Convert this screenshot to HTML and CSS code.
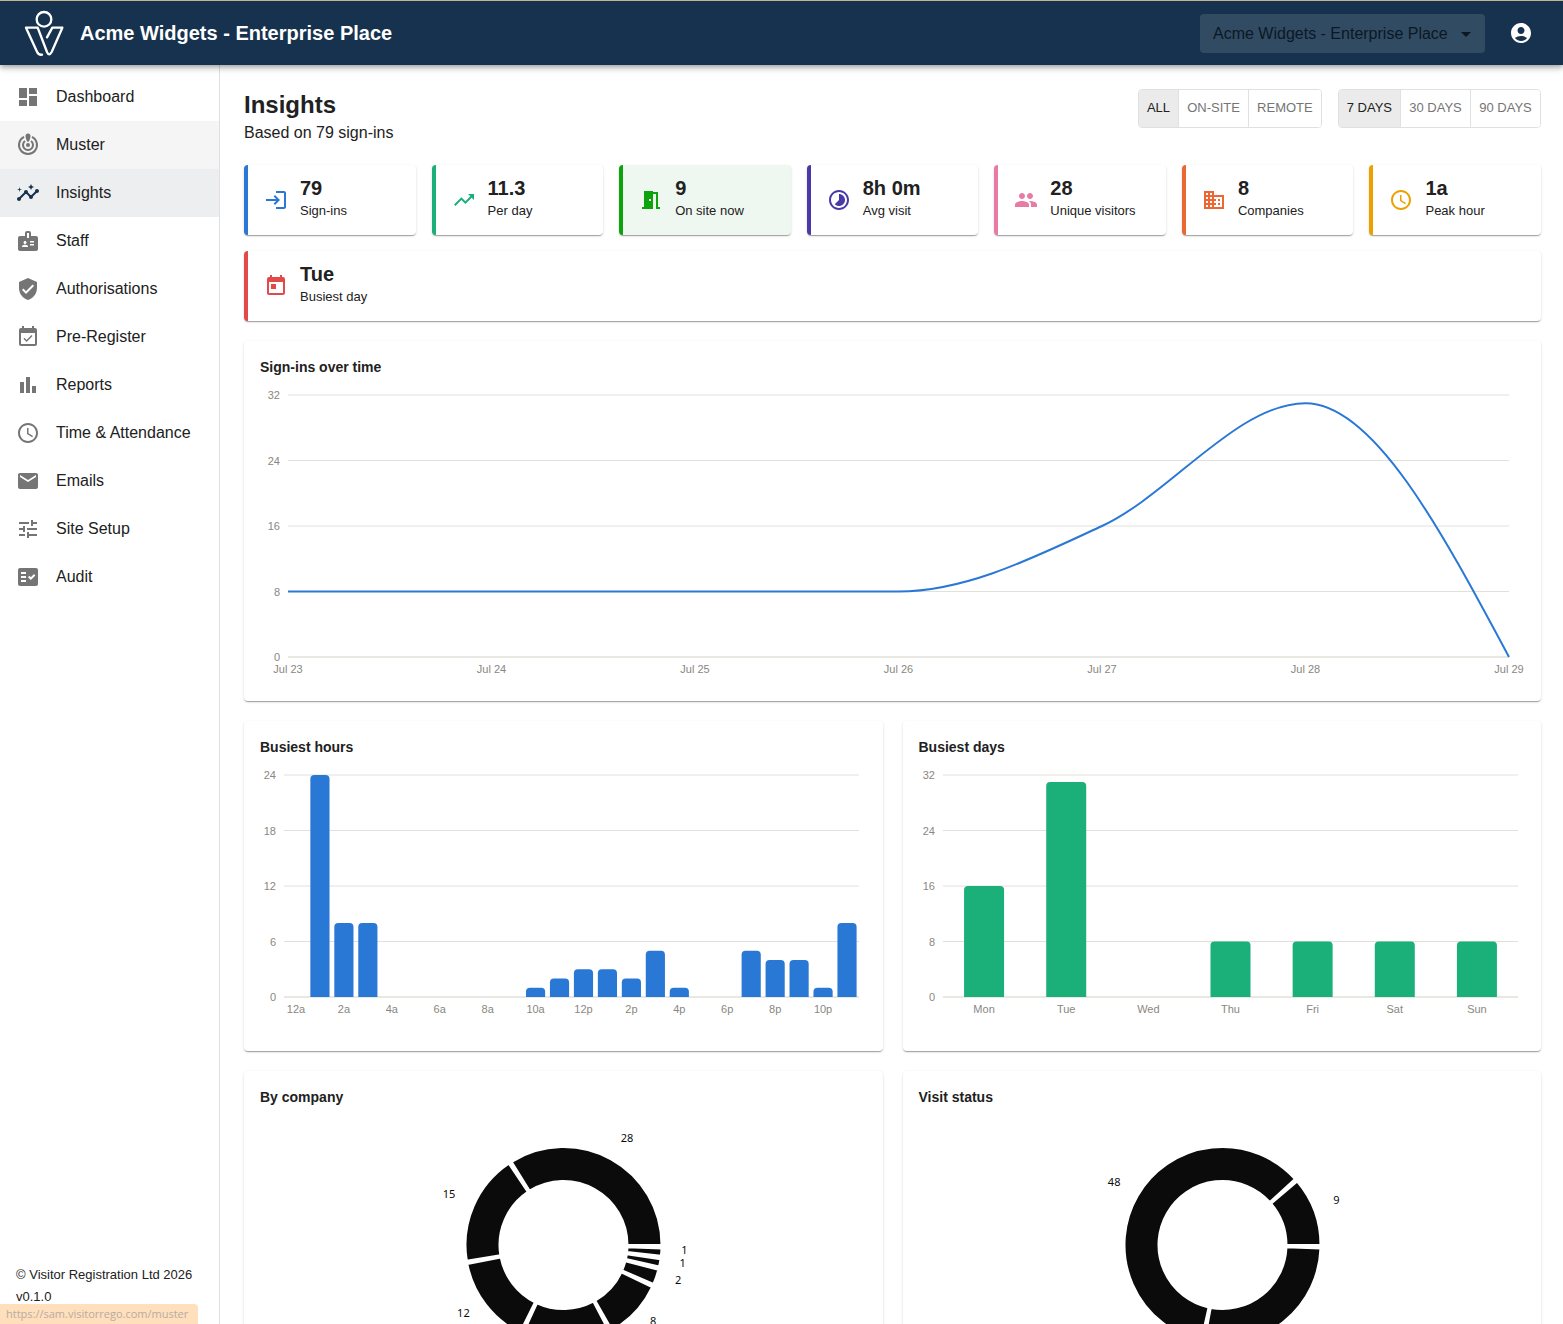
FILE: index.html
```
<!DOCTYPE html>
<html lang="en">
<head>
  <meta charset="UTF-8">
  <meta name="viewport" content="width=device-width, initial-scale=1">
  <title>Insights</title>
  <link rel="stylesheet" href="styles.css">
</head>
<body>
  <header class="topbar">
    <svg class="logo" viewBox="72 27 120 141" aria-hidden="true">
      <circle cx="132" cy="55" r="22"/>
      <path d="M126 161 Q116 163 111 152 L78 80 H113 L141 153 Q147 167 155 153 L187 80 H157 L141 109"/>
    </svg>
    <span class="site-title">Acme Widgets - Enterprise Place</span>
    <div class="site-select">
      <select aria-label="Site">
        <option>Acme Widgets - Enterprise Place</option>
      </select>
      <svg class="icon caret" viewBox="0 0 24 24"><path d="M7 10l5 5 5-5z"/></svg>
    </div>
    <button class="account-btn" type="button" aria-label="Account">
      <svg class="icon" viewBox="0 0 24 24"><path d="M12 2C6.480 2 2 6.480 2 12s4.480 10 10 10 10-4.480 10-10S17.520 2 12 2zm0 4c1.930 0 3.500 1.570 3.500 3.500S13.930 13 12 13s-3.500-1.570-3.500-3.500S10.070 6 12 6zm0 14c-2.030 0-4.430-.82-6.140-2.880C7.550 15.800 9.680 15 12 15s4.450.8 6.140 2.120C16.430 19.180 14.030 20 12 20z"/></svg>
    </button>
  </header>

  <div class="layout">
    <aside class="sidebar">
      <nav class="nav">
        <a class="nav-item" href="#">
          <svg class="icon" viewBox="0 0 24 24"><path d="M3 13h8V3H3v10zm0 8h8v-6H3v6zm10 0h8V11h-8v10zm0-18v6h8V3h-8z"/></svg>
          Dashboard
        </a>
        <a class="nav-item hovered" href="#">
          <svg class="icon" viewBox="0 0 24 24">
            <path d="M8 3.900A9 9 0 1 0 16 3.900M9 8A5 5 0 1 0 15 8" fill="none" stroke="currentColor" stroke-width="2"/>
            <circle cx="12" cy="12" r="2"/>
            <path d="M12 9C10.900 9 9.500 5 9.500 3a2.500 2.500 0 0 1 5 0C14.500 5 13.100 9 12 9z"/>
          </svg>
          Muster
        </a>
        <a class="nav-item active" href="#" aria-current="page">
          <svg class="icon" viewBox="0 0 24 24"><path d="M21 8c-1.450 0-2.260 1.440-1.930 2.510l-3.550 3.560c-.3-.09-.74-.09-1.040 0l-2.550-2.550C12.270 10.450 11.460 9 10 9c-1.450 0-2.270 1.440-1.930 2.520l-4.560 4.550C2.440 15.740 1 16.550 1 18c0 1.100.9 2 2 2 1.450 0 2.260-1.440 1.930-2.510l4.550-4.560c.3.09.74.09 1.040 0l2.550 2.550C12.730 16.550 13.540 18 15 18c1.450 0 2.270-1.440 1.930-2.520l3.560-3.550c1.070.33 2.510-.48 2.510-1.930 0-1.100-.9-2-2-2z"/><path d="M15 9l.94-2.070L18 6l-2.060-.93L15 3l-.92 2.070L12 6l2.080.93zM3.500 11L4 9l2-.5L4 8l-.5-2L3 8l-2 .5L3 9z"/></svg>
          Insights
        </a>
        <a class="nav-item" href="#">
          <svg class="icon" viewBox="0 0 24 24"><path d="M20 7h-5V4c0-1.100-.9-2-2-2h-2c-1.100 0-2 .9-2 2v3H4c-1.100 0-2 .9-2 2v11c0 1.100.9 2 2 2h16c1.100 0 2-.9 2-2V9c0-1.100-.9-2-2-2zM9 12c.83 0 1.500.67 1.500 1.500S9.830 15 9 15s-1.500-.67-1.500-1.500S8.170 12 9 12zm3 6H6v-.75c0-1 2-1.500 3-1.500s3 .5 3 1.500V18zm1-9h-2V4h2v5zm5 7.500h-4V15h4v1.500zm0-3h-4V12h4v1.500z"/></svg>
          Staff
        </a>
        <a class="nav-item" href="#">
          <svg class="icon" viewBox="0 0 24 24"><path d="M12 1L3 5v6c0 5.550 3.840 10.740 9 12 5.160-1.260 9-6.450 9-12V5l-9-4zm-2 16l-4-4 1.410-1.410L10 14.170l6.590-6.590L18 9l-8 8z"/></svg>
          Authorisations
        </a>
        <a class="nav-item" href="#">
          <svg class="icon" viewBox="0 0 24 24"><path d="M16.530 11.060L15.470 10l-4.880 4.880-2.120-2.120-1.060 1.060L10.590 17l5.940-5.940zM19 3h-1V1h-2v2H8V1H6v2H5c-1.110 0-1.990.9-1.990 2L3 19c0 1.100.89 2 2 2h14c1.100 0 2-.9 2-2V5c0-1.100-.9-2-2-2zm0 16H5V8h14v11z"/></svg>
          Pre-Register
        </a>
        <a class="nav-item" href="#">
          <svg class="icon" viewBox="0 0 24 24"><path d="M4 9h4v11H4zm12 4h4v7h-4zm-6-9h4v16h-4z"/></svg>
          Reports
        </a>
        <a class="nav-item" href="#">
          <svg class="icon" viewBox="0 0 24 24"><path d="M11.990 2C6.470 2 2 6.480 2 12s4.470 10 9.990 10C17.520 22 22 17.520 22 12S17.520 2 11.990 2zM12 20c-4.420 0-8-3.580-8-8s3.580-8 8-8 8 3.580 8 8-3.580 8-8 8z"/><path d="M12.500 7H11v6l5.250 3.150.75-1.230-4.500-2.670z"/></svg>
          Time &amp; Attendance
        </a>
        <a class="nav-item" href="#">
          <svg class="icon" viewBox="0 0 24 24"><path d="M20 4H4c-1.100 0-1.990.9-1.990 2L2 18c0 1.100.9 2 2 2h16c1.100 0 2-.9 2-2V6c0-1.100-.9-2-2-2zm0 4l-8 5-8-5V6l8 5 8-5v2z"/></svg>
          Emails
        </a>
        <a class="nav-item" href="#">
          <svg class="icon" viewBox="0 0 24 24"><path d="M3 17v2h6v-2H3zM3 5v2h10V5H3zm10 16v-2h8v-2h-8v-2h-2v6h2zM7 9v2H3v2h4v2h2V9H7zm14 4v-2H11v2h10zm-6-4h2V7h4V5h-4V3h-2v6z"/></svg>
          Site Setup
        </a>
        <a class="nav-item" href="#">
          <svg class="icon" viewBox="0 0 24 24"><path fill-rule="evenodd" d="M20 3H4c-1.100 0-2 .9-2 2v14c0 1.100.9 2 2 2h16c1.100 0 2-.9 2-2V5c0-1.100-.9-2-2-2zM10 17H5v-2h5v2zm0-4H5v-2h5v2zm0-4H5V7h5v2zm4.820 6L12 12.160l1.410-1.410 1.410 1.420L17.990 9l1.420 1.420L14.820 15z"/></svg>
          Audit
        </a>
      </nav>
      <footer class="sidebar-footer">
        <div>© Visitor Registration Ltd 2026</div>
        <div>v0.1.0</div>
      </footer>
    </aside>

    <main class="content">
      <div class="page-head">
        <div>
          <h1>Insights</h1>
          <p>Based on 79 sign-ins</p>
        </div>
        <div class="filters">
          <div class="toggle-group" role="group" aria-label="Location">
            <button type="button" class="selected" aria-pressed="true">ALL</button>
            <button type="button" aria-pressed="false">ON-SITE</button>
            <button type="button" aria-pressed="false">REMOTE</button>
          </div>
          <div class="toggle-group" role="group" aria-label="Period">
            <button type="button" class="selected" aria-pressed="true">7 DAYS</button>
            <button type="button" aria-pressed="false">30 DAYS</button>
            <button type="button" aria-pressed="false">90 DAYS</button>
          </div>
        </div>
      </div>

      <section class="tiles">
        <div class="tile blue">
          <svg class="icon" viewBox="0 0 24 24"><path d="M11 7L9.600 8.400l2.600 2.600H2v2h10.200l-2.600 2.600L11 17l5-5-5-5zm9 12h-8v2h8c1.100 0 2-.9 2-2V5c0-1.100-.9-2-2-2h-8v2h8v14z"/></svg>
          <div><div class="tile-value">79</div><div class="tile-label">Sign-ins</div></div>
        </div>
        <div class="tile teal">
          <svg class="icon" viewBox="0 0 24 24"><path d="M16 6l2.290 2.290-4.880 4.880-4-4L2 16.590 3.410 18l6-6 4 4 6.300-6.290L22 12V6z"/></svg>
          <div><div class="tile-value">11.3</div><div class="tile-label">Per day</div></div>
        </div>
        <div class="tile green">
          <svg class="icon" viewBox="0 0 24 24"><path d="M14 6v15H3v-2h2V3h9v1h5v15h2v2h-4V6h-3zm-4 5v2h2v-2h-2z"/></svg>
          <div><div class="tile-value">9</div><div class="tile-label">On site now</div></div>
        </div>
        <div class="tile purple">
          <svg class="icon" viewBox="0 0 24 24"><path d="M16.240 7.760C15.070 6.590 13.540 6 12 6v6l-4.240 4.240c2.340 2.340 6.140 2.340 8.490 0 2.340-2.340 2.340-6.140-.01-8.480zM12 2C6.480 2 2 6.480 2 12s4.480 10 10 10 10-4.480 10-10S17.520 2 12 2zm0 18c-4.420 0-8-3.580-8-8s3.580-8 8-8 8 3.580 8 8-3.580 8-8 8z"/></svg>
          <div><div class="tile-value">8h 0m</div><div class="tile-label">Avg visit</div></div>
        </div>
        <div class="tile pink">
          <svg class="icon" viewBox="0 0 24 24"><path d="M16 11c1.660 0 2.990-1.340 2.990-3S17.660 5 16 5c-1.660 0-3 1.340-3 3s1.340 3 3 3zm-8 0c1.660 0 2.990-1.340 2.990-3S9.660 5 8 5C6.340 5 5 6.340 5 8s1.340 3 3 3zm0 2c-2.330 0-7 1.170-7 3.500V19h14v-2.500c0-2.330-4.670-3.500-7-3.500zm8 0c-.29 0-.62.02-.97.05 1.160.84 1.970 1.970 1.970 3.450V19h6v-2.500c0-2.330-4.670-3.500-7-3.500z"/></svg>
          <div><div class="tile-value">28</div><div class="tile-label">Unique visitors</div></div>
        </div>
        <div class="tile orange">
          <svg class="icon" viewBox="0 0 24 24"><path d="M12 7V3H2v18h20V7H12zM6 19H4v-2h2v2zm0-4H4v-2h2v2zm0-4H4V9h2v2zm0-4H4V5h2v2zm4 12H8v-2h2v2zm0-4H8v-2h2v2zm0-4H8V9h2v2zm0-4H8V5h2v2zm10 12h-8v-2h2v-2h-2v-2h2v-2h-2V9h8v10zm-2-8h-2v2h2v-2zm0 4h-2v2h2v-2z"/></svg>
          <div><div class="tile-value">8</div><div class="tile-label">Companies</div></div>
        </div>
        <div class="tile amber">
          <svg class="icon" viewBox="0 0 24 24"><path d="M11.990 2C6.470 2 2 6.480 2 12s4.470 10 9.990 10C17.520 22 22 17.520 22 12S17.520 2 11.990 2zM12 20c-4.420 0-8-3.580-8-8s3.580-8 8-8 8 3.580 8 8-3.580 8-8 8z"/><path d="M12.500 7H11v6l5.250 3.150.75-1.230-4.500-2.670z"/></svg>
          <div><div class="tile-value">1a</div><div class="tile-label">Peak hour</div></div>
        </div>
        <div class="tile red">
          <svg class="icon" viewBox="0 0 24 24"><path d="M19 3h-1V1h-2v2H8V1H6v2H5c-1.110 0-1.990.9-1.990 2L3 19c0 1.100.89 2 2 2h14c1.100 0 2-.9 2-2V5c0-1.100-.9-2-2-2zm0 16H5V8h14v11zM7 10h5v5H7z"/></svg>
          <div><div class="tile-value">Tue</div><div class="tile-label">Busiest day</div></div>
        </div>
      </section>

      <section class="charts">
        <div class="card wide">
          <h2>Sign-ins over time</h2>
          <div class="chart chart-line" id="signins-chart"></div>
        </div>
        <div class="card">
          <h2>Busiest hours</h2>
          <div class="chart chart-bar" id="hours-chart"></div>
        </div>
        <div class="card">
          <h2>Busiest days</h2>
          <div class="chart chart-bar" id="days-chart"></div>
        </div>
        <div class="card">
          <h2>By company</h2>
          <div class="chart chart-pie" id="company-chart"></div>
        </div>
        <div class="card">
          <h2>Visit status</h2>
          <div class="chart chart-pie" id="status-chart"></div>
        </div>
      </section>
    </main>
  </div>

  <div class="link-status">https://sam.visitorrego.com/muster</div>

  <script src="charts.js"></script>
</body>
</html>
```

FILE: styles.css
```
* {
  box-sizing: border-box;
}
body {
  margin: 0;
  height: 100vh;
  display: flex;
  flex-direction: column;
  overflow: hidden;
  font-family: "Liberation Sans", Arial, sans-serif;
  font-size: 16px;
  line-height: 24px;
  color: #212121;
  background: #fff;
}
h1, h2, p {
  margin: 0;
}
button, select {
  font-family: inherit;
}
.icon {
  width: 24px;
  height: 24px;
  flex: none;
  display: block;
  fill: currentColor;
}

/* top bar */
.topbar {
  position: relative;
  z-index: 2;
  flex: none;
  display: flex;
  align-items: center;
  height: 65px;
  padding: 0 22px 0 24px;
  color: #fff;
  background: #17324e;
  border-top: 1px solid #c8b48c;
  box-shadow: 0 2px 4px -1px rgba(0,0,0,0.2), 0 4px 5px rgba(0,0,0,0.14), 0 1px 10px rgba(0,0,0,0.12);
}
.logo {
  width: 40px;
  height: 47px;
  margin-right: 16px;
  fill: none;
  stroke: #fff;
  stroke-width: 7;
  stroke-linejoin: round;
  stroke-linecap: round;
}
.site-title {
  flex: 1;
  font-size: 20px;
  font-weight: bold;
}
.site-select {
  position: relative;
  margin-right: 16px;
  color: #0b1824;
}
.site-select select {
  display: block;
  width: 285px;
  height: 39px;
  padding: 0 32px 0 13px;
  font-size: 16px;
  color: inherit;
  background: #314b63;
  border: none;
  border-radius: 4px;
  appearance: none;
}
.site-select .caret {
  position: absolute;
  right: 7px;
  top: 8px;
  pointer-events: none;
}
.account-btn {
  padding: 8px;
  color: inherit;
  background: none;
  border: none;
  border-radius: 50%;
  cursor: pointer;
}

/* sidebar */
.layout {
  flex: 1;
  min-height: 0;
  display: flex;
}
.sidebar {
  flex: none;
  width: 220px;
  display: flex;
  flex-direction: column;
  justify-content: space-between;
  border-right: 1px solid #e0e0e0;
}
.nav {
  padding-top: 8px;
}
.nav-item {
  display: flex;
  align-items: center;
  gap: 16px;
  height: 48px;
  padding: 0 16px;
  color: inherit;
  text-decoration: none;
}
.nav-item .icon {
  color: #757575;
}
.nav-item:hover, .nav-item.hovered {
  background: #f5f5f5;
}
.nav-item.active {
  background: #edeef0;
}
.nav-item.active .icon {
  color: #17324e;
}
.sidebar-footer {
  padding: 0 16px 16px;
  font-size: 13px;
  line-height: 22px;
}

/* page */
.content {
  flex: 1;
  min-width: 0;
  padding: 24px 22px 24px 24px;
  overflow-y: auto;
  scrollbar-width: none;
}
.page-head {
  display: flex;
  justify-content: space-between;
  align-items: flex-start;
  margin-bottom: 20px;
}
.page-head h1 {
  font-size: 24px;
  line-height: 32px;
}
.filters {
  display: flex;
  gap: 16px;
}
.toggle-group {
  display: flex;
  border: 1px solid #e0e0e0;
  border-radius: 4px;
  overflow: hidden;
}
.toggle-group button {
  height: 37px;
  padding: 0 8px 2px;
  font-size: 13px;
  color: #757575;
  background: #fff;
  border: none;
  cursor: pointer;
}
.toggle-group button + button {
  min-width: 70px;
  border-left: 1px solid #e0e0e0;
}
.toggle-group button.selected {
  color: #212121;
  background: #ebebeb;
}

/* stat tiles */
.tiles {
  display: flex;
  flex-wrap: wrap;
  gap: 16px;
  margin-bottom: 20px;
}
.tile {
  flex: 1 1 160px;
  display: flex;
  align-items: center;
  gap: 12px;
  padding: 12px 16px;
  background: #fff;
  border-left: 4px solid;
  border-radius: 4px;
}
.tile, .card {
  box-shadow: 0 2px 1px -1px rgba(0,0,0,0.2), 0 1px 1px rgba(0,0,0,0.14), 0 1px 3px rgba(0,0,0,0.12);
}
.tile-value {
  font-size: 20px;
  font-weight: bold;
  line-height: 22px;
}
.tile-label {
  font-size: 13px;
}
.tile-value, .tile-label {
  color: #212121;
}
.blue { color: #2a78d6; }
.teal { color: #1baf7a; }
.green { color: #0ca30c; background: #eff8f0; }
.purple { color: #4a3aa7; }
.pink { color: #e87ba4; }
.orange { color: #eb6834; }
.amber { color: #eda100; }
.red { color: #e34948; }

/* charts */
.charts {
  display: grid;
  grid-template-columns: repeat(2, minmax(0, 1fr));
  gap: 20px;
}
.card {
  padding: 16px;
  background: #fff;
  border-radius: 4px;
}
.card.wide {
  grid-column: 1 / -1;
}
.card h2 {
  margin-bottom: 10px;
  font-size: 14px;
  line-height: 20px;
}
.chart svg {
  display: block;
}
.chart-line {
  height: 298px;
}
.chart-bar {
  height: 268px;
}
.chart-pie {
  height: 256px;
}
.grid-line {
  stroke: #e1e0d9;
}
.base-line {
  stroke: #d2d1c6;
}
.tick {
  font-size: 11px;
  fill: #898781;
}
.series-line {
  fill: none;
  stroke: #2a78d6;
  stroke-width: 2;
}
.bar-blue {
  fill: #2a78d6;
}
.bar-green {
  fill: #1baf7a;
}
.slice {
  fill: #0b0b0b;
  stroke: #fff;
  stroke-width: 2;
}
.slice-label {
  font-family: "Noto Sans", sans-serif;
  font-size: 11px;
  fill: #0b0b0b;
}

/* link preview in the window corner */
.link-status {
  position: fixed;
  left: 0;
  bottom: 0;
  z-index: 3;
  padding: 0 10px 0 6px;
  font-family: "Open Sans", sans-serif;
  font-size: 11px;
  line-height: 20px;
  color: #b8aca0;
  background: #ffdfbc;
  border-top-right-radius: 4px;
}
```

FILE: charts.js
```
const signIns = {
  labels: ["Jul 23", "Jul 24", "Jul 25", "Jul 26", "Jul 27", "Jul 28", "Jul 29"],
  values: [8, 8, 8, 8, 16, 31, 0],
  ticks: [0, 8, 16, 24, 32]
};
const hours = {
  labels: ["12a", "", "2a", "", "4a", "", "6a", "", "8a", "", "10a", "", "12p", "", "2p", "", "4p", "", "6p", "", "8p", "", "10p", ""],
  values: [0, 24, 8, 8, 0, 0, 0, 0, 0, 0, 1, 2, 3, 3, 2, 5, 1, 0, 0, 5, 4, 4, 1, 8],
  ticks: [0, 6, 12, 18, 24]
};
const days = {
  labels: ["Mon", "Tue", "Wed", "Thu", "Fri", "Sat", "Sun"],
  values: [16, 31, 0, 8, 8, 8, 8],
  ticks: [0, 8, 16, 24, 32]
};
const companies = [28, 15, 12, 12, 8, 2, 1, 1];
const statuses = [9, 48, 22];

function svg(el, body) {
  el.innerHTML = `<svg width="${el.clientWidth}" height="${el.clientHeight}">${body}</svg>`;
}

function axes(data, box, xOf) {
  const max = data.ticks[data.ticks.length - 1];
  let out = "";
  data.ticks.forEach(t => {
    const y = box.bottom - (t / max) * (box.bottom - box.top);
    out += `<line class="${t ? "grid-line" : "base-line"}" x1="${box.left}" x2="${box.right}" y1="${y}" y2="${y}"/>`;
    out += `<text class="tick" x="${box.left - 8}" y="${y + 4}" text-anchor="end">${t}</text>`;
  });
  data.labels.forEach((label, i) => {
    if (label) out += `<text class="tick" x="${xOf(i)}" y="${box.bottom + 16}" text-anchor="middle">${label}</text>`;
  });
  return out;
}

// monotone cubic, so flat runs stay flat and the peak does not overshoot
function curve(pts) {
  const n = pts.length;
  const slope = i => (pts[i + 1][1] - pts[i][1]) / (pts[i + 1][0] - pts[i][0]);
  const m = new Array(n).fill(0);
  for (let i = 1; i < n - 1; i++) {
    const a = slope(i - 1), b = slope(i);
    m[i] = a * b <= 0 ? 0 : Math.sign(a) * Math.min(Math.abs(a), Math.abs(b), Math.abs(a + b) / 4) * 2;
  }
  m[0] = (3 * slope(0) - m[1]) / 2;
  m[n - 1] = (3 * slope(n - 2) - m[n - 2]) / 2;
  let d = `M${pts[0]}`;
  for (let i = 1; i < n; i++) {
    const [x0, y0] = pts[i - 1], [x1, y1] = pts[i];
    const dx = (x1 - x0) / 3;
    d += `C${x0 + dx},${y0 + dx * m[i - 1]},${x1 - dx},${y1 - dx * m[i]},${x1},${y1}`;
  }
  return d;
}

function lineChart(id, data) {
  const el = document.getElementById(id);
  const box = { left: 28, right: el.clientWidth - 16, top: 8, bottom: el.clientHeight - 28 };
  const max = data.ticks[data.ticks.length - 1];
  const step = (box.right - box.left) / (data.values.length - 1);
  const xOf = i => box.left + i * step;
  const pts = data.values.map((v, i) => [xOf(i), box.bottom - (v / max) * (box.bottom - box.top)]);
  svg(el, axes(data, box, xOf) + `<path class="series-line" d="${curve(pts)}"/>`);
}

function barChart(id, data, cls) {
  const el = document.getElementById(id);
  const box = { left: 24, right: el.clientWidth - 8, top: 8, bottom: el.clientHeight - 38 };
  const max = data.ticks[data.ticks.length - 1];
  const step = (box.right - box.left) / data.values.length;
  const w = Math.min(40, step * 0.8);
  const xOf = i => box.left + (i + 0.5) * step;
  let bars = "";
  data.values.forEach((v, i) => {
    if (!v) return;
    const h = (v / max) * (box.bottom - box.top);
    const x = xOf(i) - w / 2;
    const r = 4;
    bars += `<path class="${cls}" d="M${x},${box.bottom}v${r - h}a${r},${r} 0 0 1 ${r},${-r}h${w - 2 * r}a${r},${r} 0 0 1 ${r},${r}v${h - r}z"/>`;
  });
  svg(el, axes(data, box, xOf) + bars);
}

function pieChart(id, values) {
  const el = document.getElementById(id);
  const cx = el.clientWidth / 2, cy = el.clientHeight / 2;
  const outer = 98, inner = 64, pad = 2;
  const total = values.reduce((a, b) => a + b, 0);
  const at = (r, deg) => `${cx + r * Math.cos(deg * Math.PI / 180)},${cy - r * Math.sin(deg * Math.PI / 180)}`;
  let start = 0, out = "";
  values.forEach(v => {
    const sweep = (360 - pad * values.length) * v / total;
    const end = start + sweep, big = sweep > 180 ? 1 : 0;
    out += `<path class="slice" d="M${at(outer, start)}A${outer},${outer} 0 ${big} 0 ${at(outer, end)}L${at(inner, end)}A${inner},${inner} 0 ${big} 1 ${at(inner, start)}z"/>`;
    const [x, y] = at(outer + 20, (start + end) / 2).split(",");
    out += `<text class="slice-label" x="${x}" y="${y}" text-anchor="${x > cx ? "start" : "end"}">${v}</text>`;
    start = end + pad;
  });
  svg(el, out);
}

function render() {
  lineChart("signins-chart", signIns);
  barChart("hours-chart", hours, "bar-blue");
  barChart("days-chart", days, "bar-green");
  pieChart("company-chart", companies);
  pieChart("status-chart", statuses);
}

render();
window.addEventListener("resize", render);
```
